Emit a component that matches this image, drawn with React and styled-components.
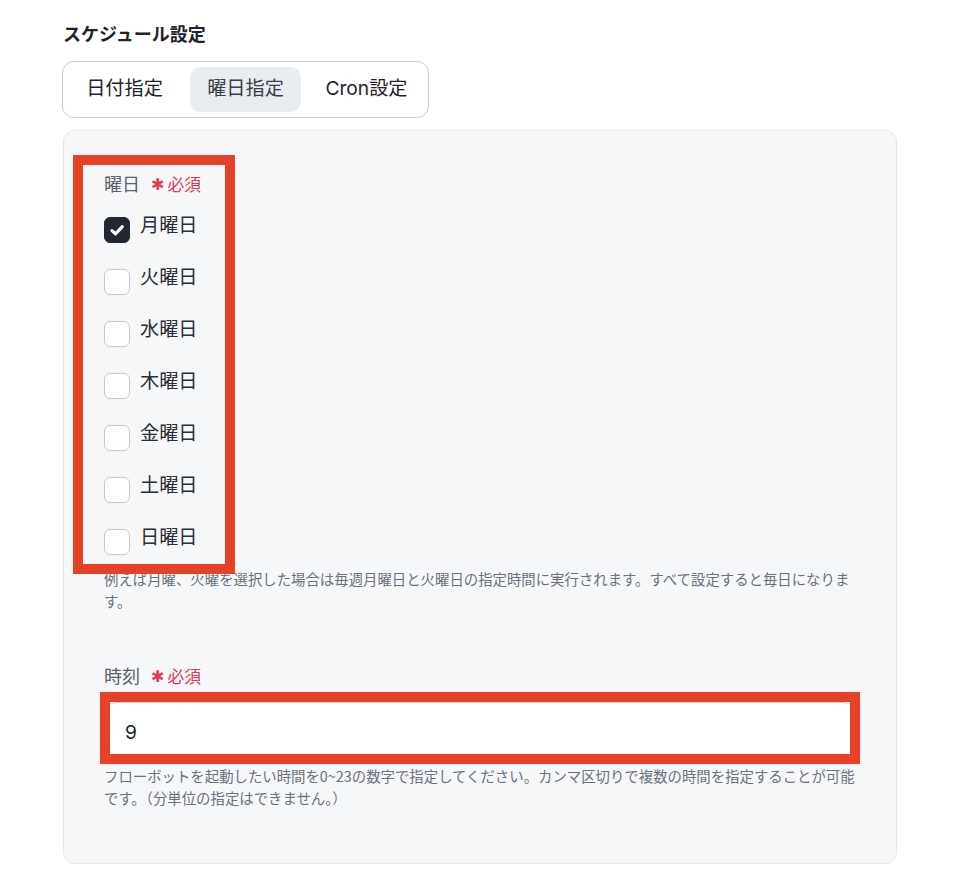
import React from "react";
import styled, { createGlobalStyle } from "styled-components";

const GlobalStyle = createGlobalStyle`
  html, body { margin: 0; padding: 0; background: #ffffff; }
  body {
    font-family: Inter, "Noto Sans CJK JP", "Noto Sans", sans-serif;
    color: #1f2329;
  }
  * { box-sizing: border-box; }
`;

const Page = styled.div`
  padding: 23px 0 28px 63px;
  width: 969px;
`;

const Title = styled.h2`
  margin: 0;
  font-size: 18px;
  line-height: 24px;
  font-weight: 700;
  color: #1f2329;
`;

const Tabs = styled.div`
  margin-top: 14px;
  display: inline-grid;
  grid-template-columns: repeat(3, 111px);
  gap: 10px;
  padding: 5px 6px;
  border: 1px solid #c9ccd3;
  border-radius: 12px;
  margin-left: -1px;
`;

const Tab = styled.button`
  height: 45px;
  border: none;
  border-radius: 10px;
  font-family: inherit;
  font-size: 19.2px;
  line-height: 43px;
  color: ${(p) => (p.$active ? "#3a3f47" : "#1f2329")};
  background: ${(p) => (p.$active ? "#e9ecf1" : "transparent")};
  padding: 0 0 2px 0;
  cursor: pointer;
`;

const Panel = styled.div`
  margin-top: 12px;
  width: 834px;
  background: #f6f7f9;
  border: 1px solid #e6e8eb;
  border-radius: 12px;
  padding: 42px 40px 55px 40px;
`;

const Field = styled.div`
  margin-top: ${(p) => p.$gap || 0}px;
`;

const Annotated = styled.div`
  position: relative;
`;

const Annotation = styled.div`
  position: absolute;
  top: ${(p) => p.$top};
  bottom: ${(p) => p.$bottom};
  left: ${(p) => p.$left};
  right: ${(p) => p.$right || "auto"};
  width: ${(p) => p.$width || "auto"};
  border: 10px solid #e8412a;
  pointer-events: none;
`;

const LabelRow = styled.div`
  display: flex;
  align-items: center;
  height: 24px;
  gap: 11px;
`;

const LabelText = styled.span`
  font-size: 18px;
  line-height: 24px;
  color: #5a606b;
`;

const Required = styled.span`
  display: inline-flex;
  align-items: center;
  gap: 3px;
  color: #e13a53;
  font-size: 16.8px;
  line-height: 24px;
`;

const Star = styled.span`
  font-family: "DejaVu Sans", sans-serif;
  font-size: 16px;
  line-height: 24px;
`;

const CheckList = styled.div`
  margin-top: 16px;
  display: flex;
  flex-direction: column;
  gap: 22px;
`;

const CheckRow = styled.label`
  display: flex;
  align-items: flex-start;
  gap: 10px;
  cursor: pointer;
`;

const Box = styled.span`
  margin-top: 4px;
  width: 26px;
  height: 26px;
  flex: none;
  border-radius: 6px;
  display: flex;
  align-items: center;
  justify-content: center;
  background: ${(p) => (p.$checked ? "#242731" : "#ffffff")};
  border: 1px solid ${(p) => (p.$checked ? "#242731" : "#c5c8ce")};
`;

const CheckText = styled.span`
  font-size: 19.2px;
  line-height: 24px;
  color: #2a2e36;
`;

const Help = styled.p`
  margin: ${(p) => p.$mt}px 0 0 0;
  font-size: 14.4px;
  line-height: 21.6px;
  color: #6b717c;
  font-family: "Noto Sans CJK JP", sans-serif;
`;

const InputWrap = styled.div`
  position: relative;
  margin-top: 13px;
`;

const TextInput = styled.input`
  display: block;
  width: 100%;
  height: 60px;
  padding: 0 20px;
  border: 1px solid #cdd0d5;
  border-radius: 12px;
  background: #ffffff;
  font-family: Inter, sans-serif;
  font-size: 19.2px;
  color: #1f2329;
  outline: none;
`;

const days = ["月曜日", "火曜日", "水曜日", "木曜日", "金曜日", "土曜日", "日曜日"];

function CheckIcon() {
  return (
    <svg width="26" height="26" viewBox="0 0 26 26" fill="none">
      <path
        d="M7.6 13.6 L11.4 17.2 L18.8 9.4"
        stroke="#ffffff"
        strokeWidth="3.4"
        strokeLinecap="round"
        strokeLinejoin="round"
      />
    </svg>
  );
}

function RequiredMark() {
  return (
    <Required>
      <Star>✱</Star>必須
    </Required>
  );
}

export default function App() {
  return (
    <>
      <GlobalStyle />
      <Page>
        <Title>スケジュール設定</Title>
        <Tabs>
          <Tab>日付指定</Tab>
          <Tab $active>曜日指定</Tab>
          <Tab>Cron設定</Tab>
        </Tabs>
        <Panel>
          <Field>
            <Annotated>
              <LabelRow>
                <LabelText>曜日</LabelText>
                <RequiredMark />
              </LabelRow>
              <CheckList>
                {days.map((d, i) => (
                  <CheckRow key={d}>
                    <Box $checked={i === 0}>{i === 0 && <CheckIcon />}</Box>
                    <CheckText>{d}</CheckText>
                  </CheckRow>
                ))}
              </CheckList>
              <Annotation $top="-18px" $bottom="-19px" $left="-31px" $width="162px" />
            </Annotated>
            <Help $mt={13}>
              例えば月曜、火曜を選択した場合は毎週月曜日と火曜日の指定時間に実行されます。すべて設定すると毎日になります。
            </Help>
          </Field>
          <Field $gap={54}>
            <LabelRow>
              <LabelText>時刻</LabelText>
              <RequiredMark />
            </LabelRow>
            <InputWrap>
              <TextInput defaultValue="9" />
              <Annotation $top="-10px" $bottom="-2px" $left="-4px" $right="-4px" />
            </InputWrap>
            <Help $mt={3}>
              フローボットを起動したい時間を0~23の数字で指定してください。カンマ区切りで複数の時間を指定することが可能です。（分単位の指定はできません。）
            </Help>
          </Field>
        </Panel>
      </Page>
    </>
  );
}
